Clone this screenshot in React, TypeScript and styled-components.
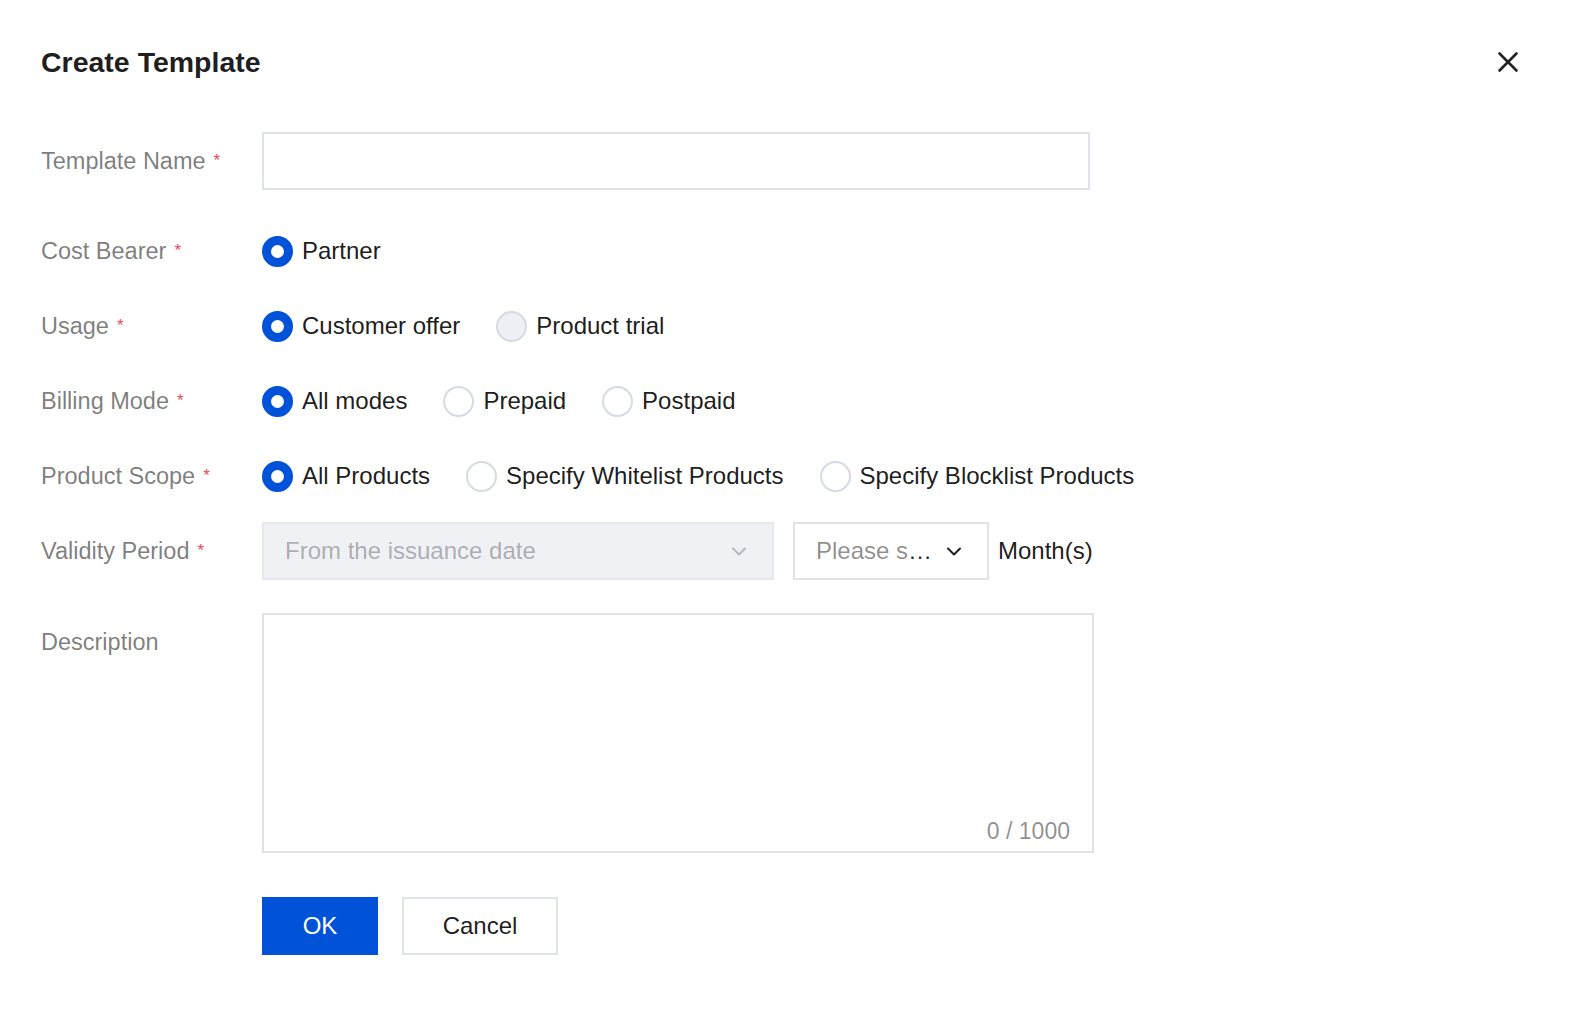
import styled, { createGlobalStyle } from 'styled-components';

const GlobalStyle = createGlobalStyle`
	html, body {
		margin: 0;
		padding: 0;
		background: #ffffff;
		overflow: hidden;
	}
	body {
		font-family: 'Liberation Sans', Arial, sans-serif;
		color: rgba(0, 0, 0, 0.9);
	}
`;

const Dialog = styled.div`
	width: 100%;
	height: 100vh;
	box-sizing: border-box;
	padding: 44px 41px 0 41px;
`;

const Header = styled.div`
	display: flex;
	align-items: center;
	justify-content: space-between;
	height: 36px;
`;

const Title = styled.h1`
	margin: 0;
	font-size: 28.5px;
	font-weight: 700;
	line-height: 36px;
	color: rgba(0, 0, 0, 0.9);
`;

const CloseButton = styled.button`
	width: 36px;
	height: 36px;
	margin-right: 23px;
	padding: 0;
	border: none;
	background: transparent;
	display: flex;
	align-items: center;
	justify-content: center;
	cursor: pointer;
`;

const Form = styled.form`
	margin-top: 52px;
	display: flex;
	flex-direction: column;
`;

const FormItem = styled.div<{ $mb: number; $alignTop?: boolean }>`
	display: flex;
	align-items: ${(p) => (p.$alignTop ? 'flex-start' : 'center')};
	margin-bottom: ${(p) => p.$mb}px;
	min-height: 58px;
`;

const Label = styled.label`
	width: 221px;
	flex-shrink: 0;
	font-size: 23.5px;
	line-height: 58px;
	color: rgba(0, 0, 0, 0.52);
	white-space: nowrap;
`;

const Required = styled.span`
	color: #e34d59;
	font-size: 17px;
	margin-left: 8px;
	vertical-align: 3px;
`;

const Control = styled.div`
	display: flex;
	align-items: center;
`;

const TextInput = styled.input`
	width: 828px;
	height: 58px;
	box-sizing: border-box;
	border: 2px solid #dfe2e8;
	border-radius: 0;
	outline: none;
	padding: 0 20px;
	font-size: 24px;
	font-family: inherit;
`;

const RadioGroup = styled.div`
	display: flex;
	align-items: center;
	gap: 36px;
`;

const RadioOption = styled.div`
	display: flex;
	align-items: center;
	gap: 9px;
	font-size: 24px;
	color: rgba(0, 0, 0, 0.9);
	cursor: pointer;
`;

const RadioCircle = styled.span<{ $checked?: boolean; $disabled?: boolean }>`
	width: 31px;
	height: 31px;
	box-sizing: border-box;
	border-radius: 50%;
	flex-shrink: 0;
	display: flex;
	align-items: center;
	justify-content: center;
	background: ${(p) => (p.$checked ? '#0052d9' : p.$disabled ? '#eef0f5' : '#ffffff')};
	border: 2px solid ${(p) => (p.$checked ? '#0052d9' : '#d5dae3')};

	&::after {
		content: '';
		display: ${(p) => (p.$checked ? 'block' : 'none')};
		width: 13px;
		height: 13px;
		border-radius: 50%;
		background: #ffffff;
	}
`;

const Select = styled.div<{ $width: number; $disabled?: boolean }>`
	width: ${(p) => p.$width}px;
	height: 58px;
	box-sizing: border-box;
	display: flex;
	align-items: center;
	justify-content: space-between;
	padding: 0 24px 0 21px;
	border: 2px solid ${(p) => (p.$disabled ? '#e6e8ee' : '#dfe2e8')};
	background: ${(p) => (p.$disabled ? '#f0f1f5' : '#ffffff')};
	font-size: 24px;
	color: ${(p) => (p.$disabled ? 'rgba(0, 0, 0, 0.3)' : 'rgba(0, 0, 0, 0.45)')};
`;

const SelectText = styled.span`
	white-space: nowrap;
`;

const Ellipsis = styled.span`
	color: rgba(0, 0, 0, 0.85);
`;

const Suffix = styled.span`
	margin-left: 9px;
	font-size: 24px;
	color: rgba(0, 0, 0, 0.9);
`;

const TextAreaWrap = styled.div`
	position: relative;
	width: 832px;
	height: 240px;
	box-sizing: border-box;
	border: 2px solid #dfe2e8;
`;

const TextArea = styled.textarea`
	width: 100%;
	height: 100%;
	box-sizing: border-box;
	border: none;
	outline: none;
	resize: none;
	padding: 14px 20px;
	font-size: 24px;
	font-family: inherit;
	background: transparent;
`;

const Counter = styled.span`
	position: absolute;
	right: 22px;
	bottom: 6px;
	font-size: 23px;
	color: rgba(0, 0, 0, 0.45);
`;

const Actions = styled.div`
	display: flex;
	gap: 24px;
	margin-left: 221px;
`;

const Button = styled.button<{ $primary?: boolean; $width: number }>`
	width: ${(p) => p.$width}px;
	height: 58px;
	box-sizing: border-box;
	font-size: 24px;
	font-family: inherit;
	border: 2px solid ${(p) => (p.$primary ? '#0052d9' : '#dfe2e8')};
	background: ${(p) => (p.$primary ? '#0052d9' : '#ffffff')};
	color: ${(p) => (p.$primary ? '#ffffff' : 'rgba(0, 0, 0, 0.9)')};
	cursor: pointer;
`;

const Chevron = ({ color }: { color: string }) => (
	<svg width="18" height="18" viewBox="0 0 18 18" fill="none">
		<path d="M3 6.5 L9 12.5 L15 6.5" stroke={color} strokeWidth="2" strokeLinecap="round" strokeLinejoin="round" />
	</svg>
);

type Option = { label: string; checked?: boolean; disabled?: boolean };

const Radios = ({ options }: { options: Option[] }) => (
	<RadioGroup>
		{options.map((o) => (
			<RadioOption key={o.label}>
				<RadioCircle $checked={o.checked} $disabled={o.disabled} />
				{o.label}
			</RadioOption>
		))}
	</RadioGroup>
);

const App = () => {
	return (
		<>
			<GlobalStyle />
			<Dialog>
				<Header>
					<Title>Create Template</Title>
					<CloseButton aria-label="Close">
						<svg width="22" height="22" viewBox="0 0 22 22">
							<path d="M2.5 2.5 L19.5 19.5 M19.5 2.5 L2.5 19.5" stroke="#222" strokeWidth="2.6" strokeLinecap="round" />
						</svg>
					</CloseButton>
				</Header>

				<Form onSubmit={(e) => e.preventDefault()}>
					<FormItem $mb={32}>
						<Label>
							Template Name<Required>*</Required>
						</Label>
						<Control>
							<TextInput />
						</Control>
					</FormItem>

					<FormItem $mb={17}>
						<Label>
							Cost Bearer<Required>*</Required>
						</Label>
						<Radios options={[{ label: 'Partner', checked: true }]} />
					</FormItem>

					<FormItem $mb={17}>
						<Label>
							Usage<Required>*</Required>
						</Label>
						<Radios
							options={[
								{ label: 'Customer offer', checked: true },
								{ label: 'Product trial', disabled: true }
							]}
						/>
					</FormItem>

					<FormItem $mb={17}>
						<Label>
							Billing Mode<Required>*</Required>
						</Label>
						<Radios
							options={[
								{ label: 'All modes', checked: true },
								{ label: 'Prepaid' },
								{ label: 'Postpaid' }
							]}
						/>
					</FormItem>

					<FormItem $mb={17}>
						<Label>
							Product Scope<Required>*</Required>
						</Label>
						<Radios
							options={[
								{ label: 'All Products', checked: true },
								{ label: 'Specify Whitelist Products' },
								{ label: 'Specify Blocklist Products' }
							]}
						/>
					</FormItem>

					<FormItem $mb={33}>
						<Label>
							Validity Period<Required>*</Required>
						</Label>
						<Control>
							<Select $width={512} $disabled>
								<SelectText>From the issuance date</SelectText>
								<Chevron color="#b5b8bf" />
							</Select>
							<Select $width={196} style={{ marginLeft: 19 }}>
								<SelectText>
									Please s<Ellipsis>…</Ellipsis>
								</SelectText>
								<Chevron color="#1f1f1f" />
							</Select>
							<Suffix>Month(s)</Suffix>
						</Control>
					</FormItem>

					<FormItem $mb={44} $alignTop>
						<Label>Description</Label>
						<TextAreaWrap>
							<TextArea />
							<Counter>0 / 1000</Counter>
						</TextAreaWrap>
					</FormItem>

					<Actions>
						<Button $primary $width={116} type="submit">
							OK
						</Button>
						<Button $width={156} type="button">
							Cancel
						</Button>
					</Actions>
				</Form>
			</Dialog>
		</>
	);
};

export default App;
